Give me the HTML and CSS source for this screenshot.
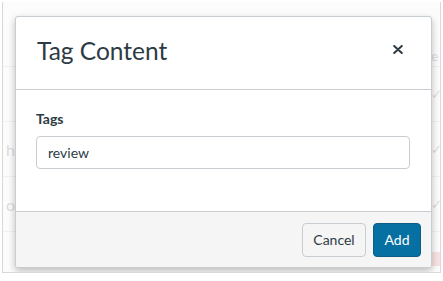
FILE: index.html
```html
<!DOCTYPE html>
<html>
<head>
<meta charset="utf-8">
<link rel="stylesheet" href="styles.css">
</head>
<body>
<div class="frame">
  <div class="page">
    <div class="row row-top"><span class="cell-l"></span><span class="cell-r">e</span></div>
    <div class="row"><span class="cell-l"></span><span class="cell-r check">✓</span></div>
    <div class="row"><span class="cell-l">h</span><span class="cell-r check">✓</span></div>
    <div class="row"><span class="cell-l">o</span><span class="cell-r check">✓</span></div>
    <div class="row"><span class="cell-l"></span><span class="cell-r"><span class="red"></span></span></div>
  </div>
  <div class="overlay"></div>
  <div class="modal">
    <div class="modal-header">
      <h1 class="title">Tag Content</h1>
      <button class="close" aria-label="Close">
        <svg width="10" height="9" viewBox="0 0 10 9"><path d="M1.2 1 L8.8 8 M8.8 1 L1.2 8" stroke="#2d3b45" stroke-width="2" stroke-linecap="round"/></svg>
      </button>
    </div>
    <div class="modal-body">
      <label class="label">Tags</label>
      <div class="input">review</div>
    </div>
    <div class="modal-footer">
      <button class="btn btn-cancel">Cancel</button>
      <button class="btn btn-add">Add</button>
    </div>
  </div>
</div>
</body>
</html>
```

FILE: styles.css
```css
* { box-sizing: border-box; }
html, body { margin: 0; padding: 0; background: #fff; }
body { width: 443px; height: 281px; overflow: hidden; font-family: Lato, "Noto Sans", sans-serif; padding: 2px 2px 0 2px; }

.frame {
  position: relative;
  width: 439px;
  height: 271px;
  border: 1px solid #d9d9d9;
  border-top: none;
  background: #f8f8f8;
  overflow: hidden;
}

.page { color: #b8b8b8; }
.row {
  height: 55px;
  border-top: 1px solid #e2e2e2;
  display: flex;
  justify-content: space-between;
  align-items: center;
  font-size: 16px;
  padding: 0 0 0 3px;
}
.row-top { height: 64px; border-top: none; align-items: flex-end; padding-bottom: 2px; }
.cell-r { width: 9px; font-size: 14px; white-space: nowrap; overflow: hidden; }
.check { font-size: 13px; }
.red { display: block; width: 14px; height: 14px; background: #f0c6c6; margin-top: 0; }

.overlay {
  position: absolute;
  inset: 0;
  background: rgba(255,255,255,0.5);
}

.modal {
  position: absolute;
  left: 12px;
  top: 14px;
  width: 417px;
  height: 252px;
  background: #fff;
  border: 1px solid #c7cdd1;
  border-radius: 3px;
  box-shadow: 0 3px 6px rgba(0,0,0,0.12), 0 3px 8px rgba(0,0,0,0.14);
  display: flex;
  flex-direction: column;
  overflow: hidden;
}

.modal-header {
  height: 73px;
  border-bottom: 1px solid #c7cdd1;
  display: flex;
  align-items: center;
  justify-content: space-between;
  padding: 0 28px 4px 21px;
  flex: none;
}
.title {
  margin: 0;
  font-size: 24.5px;
  font-weight: 400;
  color: #2d3b45;
  line-height: 1;
}
.close {
  border: none;
  background: none;
  padding: 0;
  width: 10px;
  height: 9px;
  display: flex;
  margin-top: -3px;
}

.modal-body {
  flex: 1;
  padding: 20px 21px 0 20px;
}
.label {
  display: block;
  font-size: 14px;
  font-weight: 700;
  color: #2d3b45;
  line-height: 18px;
  margin-bottom: 8px;
}
.input {
  height: 33px;
  border: 1px solid #c7cdd1;
  border-radius: 4px;
  padding: 0 11px;
  font-size: 14px;
  line-height: 31px;
  color: #2d3b45;
}

.modal-footer {
  height: 56px;
  flex: none;
  background: #f5f5f5;
  border-top: 1px solid #c7cdd1;
  display: flex;
  justify-content: flex-end;
  align-items: center;
  gap: 7px;
  padding: 0 10px 0 0;
}
.btn {
  height: 34px;
  border-radius: 4px;
  font-family: Lato, "Noto Sans", sans-serif;
  font-size: 14px;
  padding: 0;
  line-height: 32px;
}
.btn-cancel {
  width: 64px;
  background: #f5f5f5;
  border: 1px solid #c7cdd1;
  color: #2d3b45;
}
.btn-add {
  width: 48px;
  background: #0770a3;
  border: 1px solid #0a5e87;
  color: #fff;
}
```
